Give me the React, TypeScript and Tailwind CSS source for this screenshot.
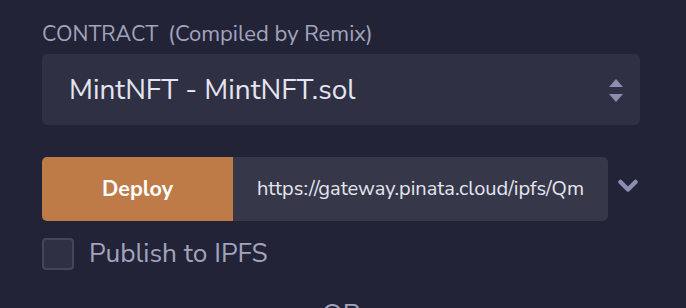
import React from "react";

export default function App() {
  const font = { fontFamily: '"Nunito Sans", Nunito, Lato, "Open Sans", sans-serif' };
  return (
    <div className="w-[686px] h-[308px] overflow-hidden bg-[#222336] pl-[42px] pt-[16px]" style={font}>
      <div className="flex items-center gap-[10px] h-[38px] pb-[2px]">
        <span className="text-[21.5px] text-[#a2a3bd]">CONTRACT</span>
        <span className="text-[22px] text-[#a2a3bd]">(Compiled by Remix)</span>
      </div>
      <div className="w-[598px] h-[71px] rounded-[5px] bg-[#2f3043] flex items-center justify-between pl-[27px] pr-[17px]">
        <span className="text-[28px] text-[#e4e5ef]">MintNFT - MintNFT.sol</span>
        <svg width="14" height="24" viewBox="0 0 14 24" className="mt-[2px]">
          <polygon points="7,0 14,8 0,8" fill="#8a8fb0" />
          <polygon points="0,15 14,15 7,23" fill="#8a8fb0" />
        </svg>
      </div>
      <div className="flex items-center mt-[32px]">
        <div className="w-[191px] h-[64px] rounded-l-[5px] bg-[#be7b48] flex items-center justify-center">
          <span className="text-[21.5px] font-bold text-white">Deploy</span>
        </div>
        <div className="w-[375px] h-[64px] rounded-r-[5px] bg-[#363749] flex items-center pl-[24px]">
          <span className="text-[20px] text-[#e4e5ef] whitespace-nowrap">https://gateway.pinata.cloud/ipfs/Qm</span>
        </div>
        <svg width="20" height="14" viewBox="0 0 20 14" className="ml-[10px] -mt-[7px]">
          <path d="M2.5 3 L10 10.5 L17.5 3" fill="none" stroke="#8a8fb0" strokeWidth="4.5" strokeLinecap="round" strokeLinejoin="round" />
        </svg>
      </div>
      <div className="flex items-center mt-[13px] gap-[15px]">
        <div className="w-[32px] h-[32px] rounded-[4px] bg-[#2f3043] border-[2px] border-[#44455c]" />
        <span className="text-[26.3px] text-[#a2a3bd]">Publish to IPFS</span>
      </div>
      <div className="pl-[280px] mt-[22px]">
        <span className="text-[27px] text-[#a2a3bd]">OR</span>
      </div>
    </div>
  );
}
